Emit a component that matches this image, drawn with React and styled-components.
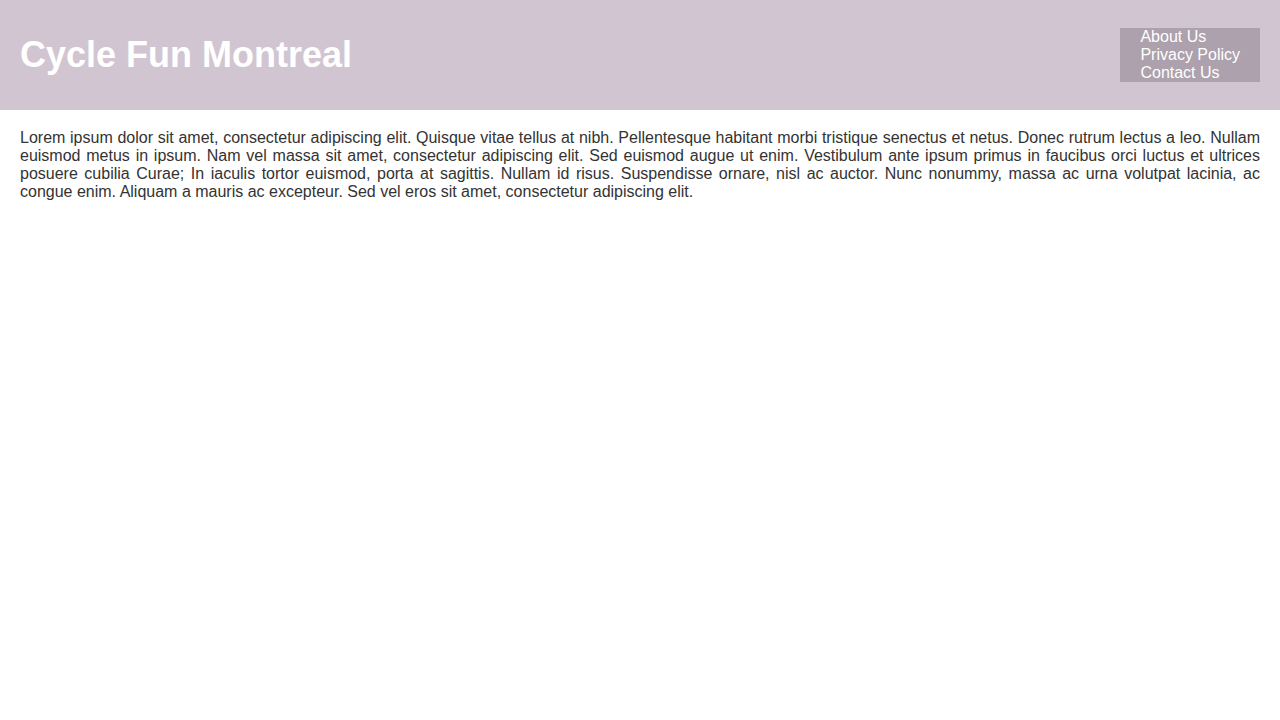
import React from "react";
import styled, { createGlobalStyle } from "styled-components";

const GlobalStyle = createGlobalStyle`
  body {
    margin: 0;
    background: #ffffff;
    font-family: "Liberation Sans", Arial, sans-serif;
  }
`;

const Header = styled.header`
  height: 110px;
  display: flex;
  align-items: center;
  justify-content: space-between;
  padding: 0 20px;
  background: #d2c5d2;
  box-sizing: border-box;
`;

const Title = styled.h1`
  margin: 0;
  font-size: 36px;
  font-weight: bold;
  color: #ffffff;
`;

const NavList = styled.ul`
  list-style: none;
  margin: 0;
  padding: 0 20px;
  background: rgba(0, 0, 0, 0.18);
`;

const NavItem = styled.li`
  font-size: 16px;
  line-height: 18px;
  color: #ffffff;
`;

const Main = styled.main`
  padding: 0 20px;
`;

const Text = styled.p`
  margin: 19px 0 0;
  font-size: 16px;
  line-height: 18px;
  color: #333333;
  text-align: justify;
`;

const links = ["About Us", "Privacy Policy", "Contact Us"];

export default function App() {
  return (
    <>
      <GlobalStyle />
      <Header>
        <Title>Cycle Fun Montreal</Title>
        <nav>
          <NavList>
            {links.map(l => (
              <NavItem key={l}>{l}</NavItem>
            ))}
          </NavList>
        </nav>
      </Header>
      <Main>
        <Text>
          Lorem ipsum dolor sit amet, consectetur adipiscing elit. Quisque vitae tellus at nibh. Pellentesque habitant morbi tristique senectus et netus. Donec rutrum lectus a leo. Nullam euismod metus in ipsum. Nam vel massa sit amet, consectetur adipiscing elit. Sed euismod augue ut enim. Vestibulum ante ipsum primus in faucibus orci luctus et ultrices posuere cubilia Curae; In iaculis tortor euismod, porta at sagittis. Nullam id risus. Suspendisse ornare, nisl ac auctor. Nunc nonummy, massa ac urna volutpat lacinia, ac congue enim. Aliquam a mauris ac excepteur. Sed vel eros sit amet, consectetur adipiscing elit.
        </Text>
      </Main>
    </>
  );
}
